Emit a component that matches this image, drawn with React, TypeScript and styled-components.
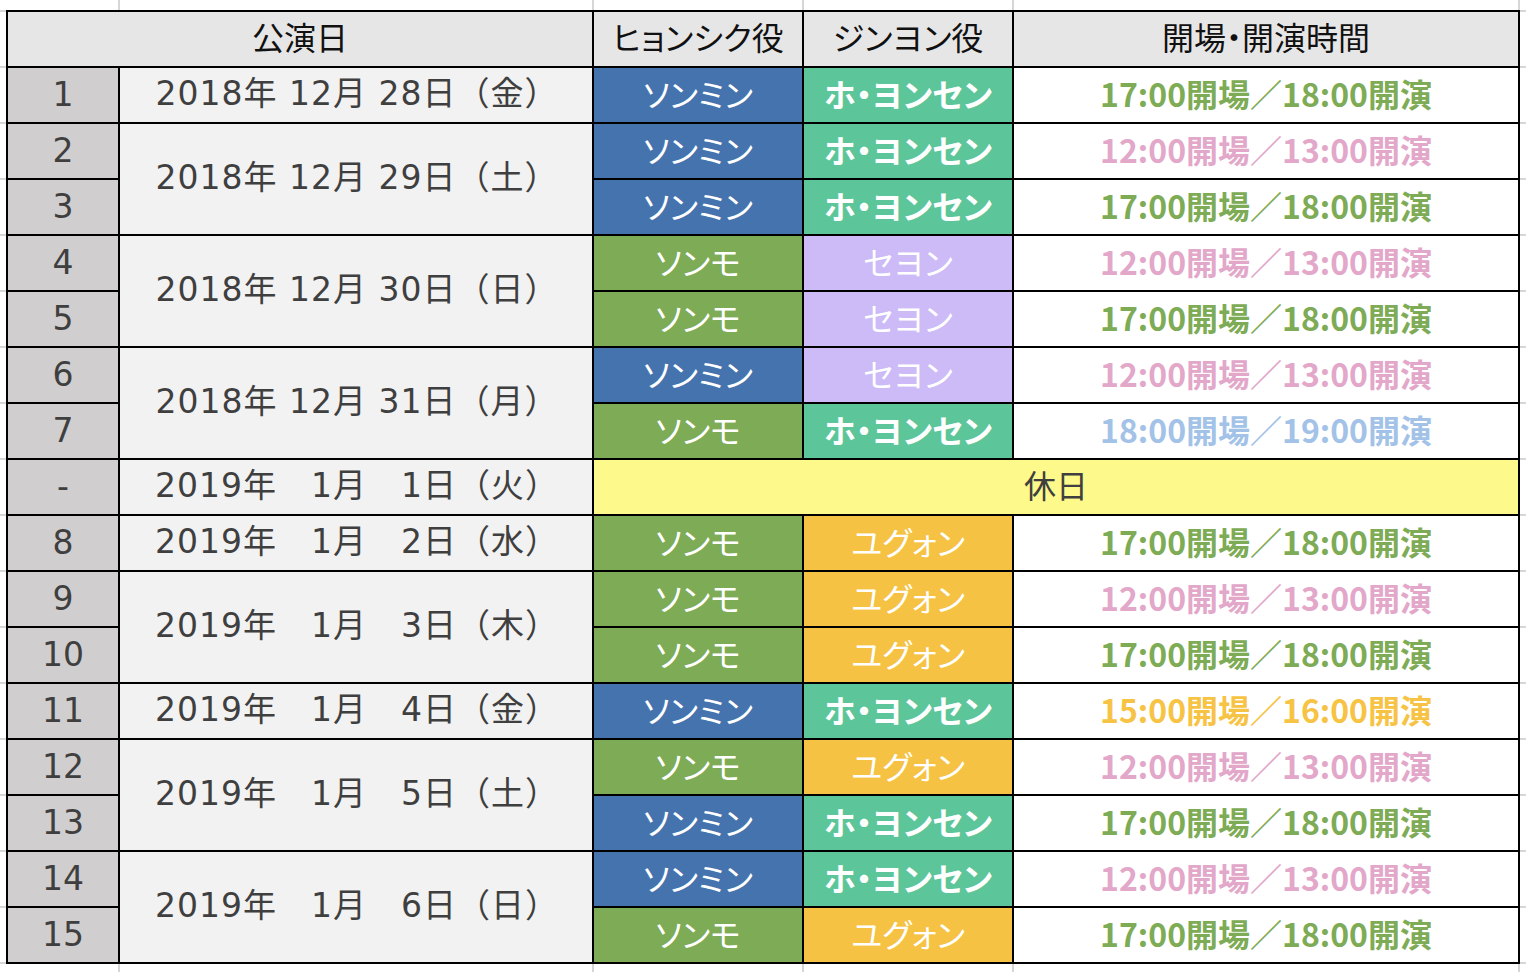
import styled, { createGlobalStyle } from "styled-components";

const GlobalStyle = createGlobalStyle`
    html, body {
        margin: 0;
        padding: 0;
        background: #ffffff;
    }
    body {
        font-family: "DejaVu Sans", "Noto Sans CJK JP", sans-serif;
    }
`;

const GRID = "#d6d6d6";

const Sheet = styled.div`
    min-height: 100vh;
    box-sizing: border-box;
    padding: 10px 0 0 6px;
    background-image:
        linear-gradient(to right,
            transparent 118px, ${GRID} 118px, ${GRID} 120px, transparent 120px,
            transparent 592px, ${GRID} 592px, ${GRID} 594px, transparent 594px,
            transparent 802px, ${GRID} 802px, ${GRID} 804px, transparent 804px,
            transparent 1012px, ${GRID} 1012px, ${GRID} 1014px, transparent 1014px,
            transparent 1518px, ${GRID} 1518px, ${GRID} 1520px, transparent 1520px),
        repeating-linear-gradient(to bottom,
            transparent 0 10px, ${GRID} 10px 12px, transparent 12px 56px);
`;

const Table = styled.table`
    border-collapse: collapse;
    table-layout: fixed;
    width: 1512px;
    background: #ffffff;
`;

const Cell = styled.td`
    border: 2px solid #000000;
    height: 56px;
    padding: 0 0 3px;
    text-align: center;
    vertical-align: middle;
    box-sizing: border-box;
    white-space: pre;
    line-height: 1;
    font-feature-settings: "palt";
`;

const HeadCell = styled(Cell).attrs({ as: "th" })`
    background: #e7e6e6;
    color: #111111;
    font-family: "Noto Sans CJK JP", sans-serif;
    font-size: 32px;
    font-weight: 400;
    padding-bottom: 6px;
`;

const NumCell = styled(Cell)`
    background: #d0cece;
    color: #3f3f3f;
    font-size: 33px;
    padding-bottom: 2px;
`;

const DateCell = styled(Cell)`
    background: #f2f2f2;
    color: #3f3f3f;
    font-size: 33px;
    letter-spacing: 1px;
    padding: 0 0 4px 2px;
    font-feature-settings: normal;
`;

const RoleCell = styled(Cell)<{ $bg: string; $bold?: boolean }>`
    background: ${(p) => p.$bg};
    color: #ffffff;
    font-family: "Noto Sans CJK JP", sans-serif;
    font-size: 32px;
    font-weight: ${(p) => (p.$bold ? 700 : 400)};
    padding-bottom: 5px;
`;

const TimeCell = styled(Cell)<{ $color: string }>`
    color: ${(p) => p.$color};
    font-family: "Noto Sans CJK JP", sans-serif;
    font-size: 32px;
    font-weight: 700;
    font-feature-settings: normal;
    padding-bottom: 4px;
`;

const HolidayCell = styled(Cell)`
    background: #fdf98b;
    color: #3f3f3f;
    font-family: "Noto Sans CJK JP", sans-serif;
    font-size: 32px;
    padding-bottom: 6px;
`;

const ROLES: Record<string, { bg: string; bold?: boolean }> = {
    ソンミン: { bg: "#4573ad" },
    ソンモ: { bg: "#7eab55" },
    "ホ・ヨンセン": { bg: "#5cc69a", bold: true },
    セヨン: { bg: "#ccbbf7" },
    ユグォン: { bg: "#f5c243" },
};

const TIMES: Record<string, { text: string; color: string }> = {
    eve: { text: "17:00開場／18:00開演", color: "#7eab55" },
    day: { text: "12:00開場／13:00開演", color: "#e2a7c9" },
    late: { text: "18:00開場／19:00開演", color: "#a3c2e8" },
    mid: { text: "15:00開場／16:00開演", color: "#f7c344" },
};

interface IShow {
    no: string;
    date?: string;
    span?: number;
    hyunsik?: string;
    jinyoung?: string;
    time?: string;
    holiday?: boolean;
}

const shows: IShow[] = [
    { no: "1", date: "2018年 12月 28日（金）", span: 1, hyunsik: "ソンミン", jinyoung: "ホ・ヨンセン", time: "eve" },
    { no: "2", date: "2018年 12月 29日（土）", span: 2, hyunsik: "ソンミン", jinyoung: "ホ・ヨンセン", time: "day" },
    { no: "3", hyunsik: "ソンミン", jinyoung: "ホ・ヨンセン", time: "eve" },
    { no: "4", date: "2018年 12月 30日（日）", span: 2, hyunsik: "ソンモ", jinyoung: "セヨン", time: "day" },
    { no: "5", hyunsik: "ソンモ", jinyoung: "セヨン", time: "eve" },
    { no: "6", date: "2018年 12月 31日（月）", span: 2, hyunsik: "ソンミン", jinyoung: "セヨン", time: "day" },
    { no: "7", hyunsik: "ソンモ", jinyoung: "ホ・ヨンセン", time: "late" },
    { no: "-", date: "2019年　1月　1日（火）", span: 1, holiday: true },
    { no: "8", date: "2019年　1月　2日（水）", span: 1, hyunsik: "ソンモ", jinyoung: "ユグォン", time: "eve" },
    { no: "9", date: "2019年　1月　3日（木）", span: 2, hyunsik: "ソンモ", jinyoung: "ユグォン", time: "day" },
    { no: "10", hyunsik: "ソンモ", jinyoung: "ユグォン", time: "eve" },
    { no: "11", date: "2019年　1月　4日（金）", span: 1, hyunsik: "ソンミン", jinyoung: "ホ・ヨンセン", time: "mid" },
    { no: "12", date: "2019年　1月　5日（土）", span: 2, hyunsik: "ソンモ", jinyoung: "ユグォン", time: "day" },
    { no: "13", hyunsik: "ソンミン", jinyoung: "ホ・ヨンセン", time: "eve" },
    { no: "14", date: "2019年　1月　6日（日）", span: 2, hyunsik: "ソンミン", jinyoung: "ホ・ヨンセン", time: "day" },
    { no: "15", hyunsik: "ソンモ", jinyoung: "ユグォン", time: "eve" },
];

function Role({ name }: { name: string }) {
    const r = ROLES[name];
    return (
        <RoleCell $bg={r.bg} $bold={r.bold}>
            {name}
        </RoleCell>
    );
}

function App() {
    return (
        <>
            <GlobalStyle />
            <Sheet>
                <Table>
                    <colgroup>
                        <col style={{ width: 112 }} />
                        <col style={{ width: 474 }} />
                        <col style={{ width: 210 }} />
                        <col style={{ width: 210 }} />
                        <col style={{ width: 506 }} />
                    </colgroup>
                    <thead>
                        <tr>
                            <HeadCell colSpan={2}>公演日</HeadCell>
                            <HeadCell>ヒョンシク役</HeadCell>
                            <HeadCell>ジンヨン役</HeadCell>
                            <HeadCell>開場・開演時間</HeadCell>
                        </tr>
                    </thead>
                    <tbody>
                        {shows.map((s) => (
                            <tr key={s.no}>
                                <NumCell>{s.no}</NumCell>
                                {s.date && <DateCell rowSpan={s.span}>{s.date}</DateCell>}
                                {s.holiday ? (
                                    <HolidayCell colSpan={3}>休日</HolidayCell>
                                ) : (
                                    <>
                                        <Role name={s.hyunsik!} />
                                        <Role name={s.jinyoung!} />
                                        <TimeCell $color={TIMES[s.time!].color}>{TIMES[s.time!].text}</TimeCell>
                                    </>
                                )}
                            </tr>
                        ))}
                    </tbody>
                </Table>
            </Sheet>
        </>
    );
}

export default App;
